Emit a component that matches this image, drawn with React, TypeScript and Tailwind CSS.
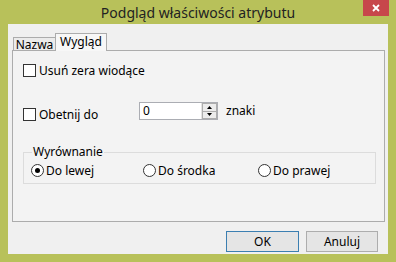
export default function App() {
  const font = { fontFamily: '"Noto Sans", "Open Sans", sans-serif' };
  return (
    <div className="w-[396px] h-[262px] bg-[#B8C15A] flex flex-col" style={font}>
      <div className="h-[24px] grid grid-cols-[1fr_auto_1fr] items-start shrink-0">
        <div />
        <div className="text-[14px] leading-[24px] text-[#222222] pt-[1px]">Podgląd właściwości atrybutu</div>
        <div className="flex justify-end pr-[7px]">
          <div className="w-[26px] h-[16px] bg-[#C7474B] flex items-center justify-center">
            <svg width="8" height="8" viewBox="0 0 8 8">
              <path d="M1 1 L7 7 M7 1 L1 7" stroke="#ffffff" strokeWidth="1.8" />
            </svg>
          </div>
        </div>
      </div>
      <div className="mx-[8px] mb-[8px] flex-1 bg-[#F0F0F0] flex flex-col text-[12px] text-black">
        <div className="flex items-end pl-[5px] pt-[9px] h-[26px]">
          <div className="w-[42px] h-[13px] border-l border-t border-[#ACACAC] bg-[#EBEBEB] flex items-center justify-center leading-none">
            <span className="pt-[1px]">Nazwa</span>
          </div>
          <div className="relative z-10 -mb-px w-[52px] h-[18px] border-l border-t border-r border-[#ACACAC] bg-[#F7F7F7] flex items-start justify-center leading-none pt-[2px]">
            <span>Wygląd</span>
          </div>
        </div>
        <div className="ml-[4px] mr-[3px] h-[172px] border border-[#ACACAC] bg-[#F3F3F3] flex flex-col pl-[10px]">
          <div className="flex items-center mt-[13px] h-[13px]">
            <div className="w-[13px] h-[13px] border border-[#333333] bg-white" />
            <span className="ml-[3px] leading-none">Usuń zera wiodące</span>
          </div>
          <div className="flex items-start mt-[25px] h-[18px]">
            <div className="flex items-center mt-[6px] w-[116px]">
              <div className="w-[13px] h-[13px] border border-[#333333] bg-white" />
              <span className="ml-[3px] leading-none">Obetnij do</span>
            </div>
            <div className="w-[79px] h-[18px] border border-[#ABADB3] bg-white flex items-center justify-between">
              <span className="pl-[3px] leading-none">0</span>
              <div className="w-[16px] h-[16px] flex flex-col border-l border-[#E3E3E3]">
                <div className="flex-1 bg-[#ECECEC] border border-[#ADADAD] flex items-center justify-center">
                  <svg width="5" height="3" viewBox="0 0 5 3"><path d="M0 3 L2.5 0 L5 3 Z" fill="#000" /></svg>
                </div>
                <div className="flex-1 bg-[#ECECEC] border border-t-0 border-[#ADADAD] flex items-center justify-center">
                  <svg width="5" height="3" viewBox="0 0 5 3"><path d="M0 0 L2.5 3 L5 0 Z" fill="#000" /></svg>
                </div>
              </div>
            </div>
            <span className="ml-[8px] mt-[3px] leading-none">znaki</span>
          </div>
          <fieldset className="mt-[26px] w-[353px] h-[38px] border border-[#DCDCDC] px-[7px] pb-[0px] m-0">
            <legend className="px-[1px] leading-none ml-[1px]">Wyrównanie</legend>
            <div className="flex items-center mt-[6px]">
              <div className="flex items-center w-[112px]">
                <div className="w-[13px] h-[13px] rounded-full border border-[#333333] bg-white flex items-center justify-center">
                  <div className="w-[5px] h-[5px] rounded-full bg-black" />
                </div>
                <span className="ml-[2px] leading-none">Do lewej</span>
              </div>
              <div className="flex items-center w-[115px]">
                <div className="w-[13px] h-[13px] rounded-full border border-[#333333] bg-white" />
                <span className="ml-[2px] leading-none">Do środka</span>
              </div>
              <div className="flex items-center">
                <div className="w-[13px] h-[13px] rounded-full border border-[#333333] bg-white" />
                <span className="ml-[2px] leading-none">Do prawej</span>
              </div>
            </div>
          </fieldset>
        </div>
        <div className="flex justify-end gap-[7px] mt-[9px] pr-[10px]">
          <div className="w-[73px] h-[21px] border border-[#3C7FB1] bg-[#E5E5E5] flex items-center justify-center leading-none">OK</div>
          <div className="w-[72px] h-[21px] border border-[#ADADAD] bg-[#E5E5E5] flex items-center justify-center leading-none">Anuluj</div>
        </div>
      </div>
    </div>
  );
}
